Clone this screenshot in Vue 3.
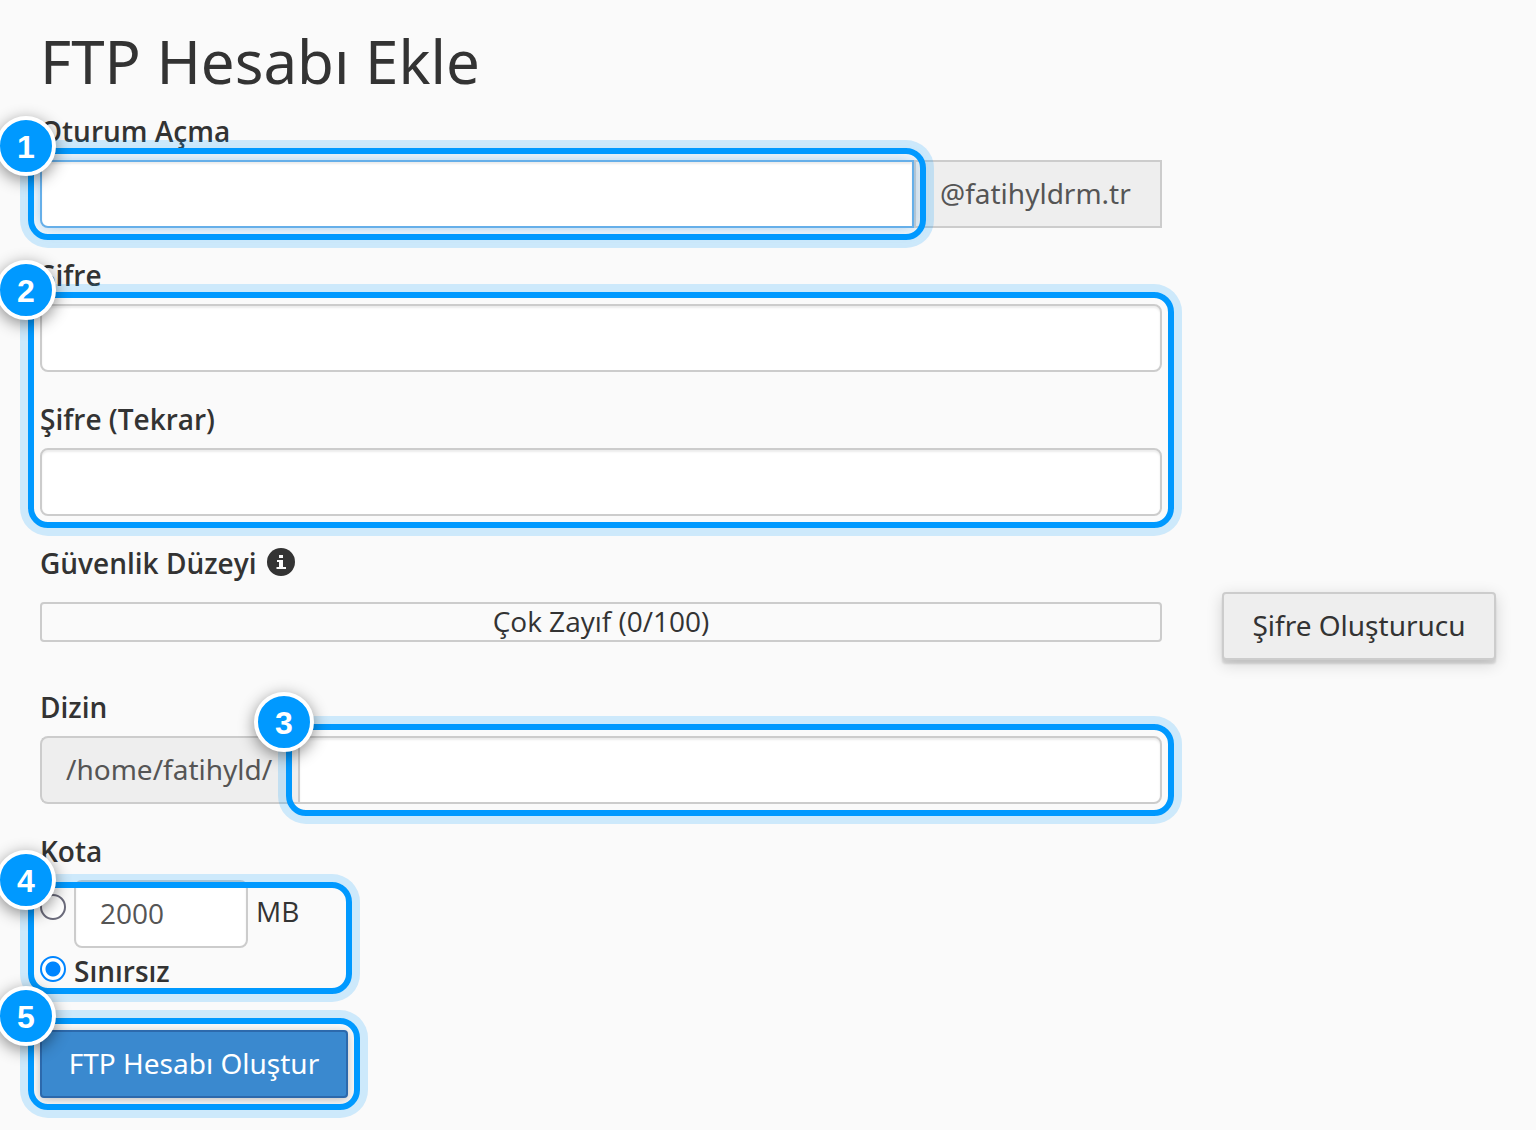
<script setup>
    import { ref, computed } from "vue";

    const login = ref("");
    const password = ref("");
    const passwordAgain = ref("");
    const directory = ref("");
    const quota = ref("2000");
    const quotaType = ref("unlimited");
    const score = ref(0);

    const strengthText = computed(() => `Çok Zayıf (${score.value}/100)`);
</script>
<template>
    <main class="page">
        <h1>FTP Hesabı Ekle</h1>
        <form class="form" @submit.prevent>
            <div class="fields">
                <div class="group">
                    <label for="login">Oturum Açma</label>
                    <div class="input-group">
                        <div class="marked grow">
                            <input id="login" class="control focused joined-right" type="text" v-model="login" />
                            <span class="mark"></span>
                            <span class="badge">1</span>
                        </div>
                        <span class="addon addon-right">@fatihyldrm.tr</span>
                    </div>
                </div>
                <div class="group">
                    <label for="password">Şifre</label>
                    <div class="marked">
                        <div class="group">
                            <input id="password" class="control" type="password" v-model="password" />
                        </div>
                        <label for="password-again">Şifre (Tekrar)</label>
                        <input id="password-again" class="control" type="password" v-model="passwordAgain" />
                        <span class="mark"></span>
                        <span class="badge">2</span>
                    </div>
                </div>
                <span id="strength-label" class="label strength-label">
                    Güvenlik Düzeyi
                    <svg class="info" viewBox="0 0 28 28" aria-hidden="true">
                        <circle cx="14" cy="14" r="14" fill="#333" />
                        <path d="M12 7h4v3h-4zM10 12h6v7h3v2h-9.500v-2h2.500v-5h-2z" fill="#fafafa" />
                    </svg>
                </span>
            </div>
            <div class="strength" role="meter" aria-labelledby="strength-label" aria-valuemin="0" aria-valuemax="100" :aria-valuenow="score">
                {{ strengthText }}
            </div>
            <button type="button" class="btn btn-generate">Şifre Oluşturucu</button>
            <div class="fields">
                <div class="group">
                    <label for="directory">Dizin</label>
                    <div class="input-group">
                        <span class="addon addon-left">/home/fatihyld/</span>
                        <div class="marked grow">
                            <input id="directory" class="control joined-left" type="text" v-model="directory" />
                            <span class="mark"></span>
                            <span class="badge">3</span>
                        </div>
                    </div>
                </div>
                <div class="quota-group">
                    <label for="quota">Kota</label>
                    <div class="marked quota">
                        <div class="quota-row limited">
                            <input type="radio" name="quota-type" value="limited" aria-label="Kota (MB)" v-model="quotaType" />
                            <input id="quota" class="control quota-input" type="text" v-model="quota" />
                            <span class="unit">MB</span>
                        </div>
                        <div class="quota-row">
                            <input id="unlimited" type="radio" name="quota-type" value="unlimited" v-model="quotaType" />
                            <label for="unlimited" class="radio-label">Sınırsız</label>
                        </div>
                        <span class="mark mark-tight"></span>
                        <span class="badge badge-tight">4</span>
                    </div>
                </div>
                <div class="marked submit">
                    <button type="submit" class="btn btn-primary">FTP Hesabı Oluştur</button>
                    <span class="mark"></span>
                    <span class="badge">5</span>
                </div>
            </div>
        </form>
    </main>
</template>

<style>
    body {
        margin: 0;
        background: #fafafa;
    }
</style>
<style scoped>
    * {
        box-sizing: border-box;
    }
    .page {
        padding: 28px 40px 32px;
        color: #333;
        font-family: "Open Sans", "Noto Sans", sans-serif;
        font-size: 28px;
        line-height: 38px;
    }
    h1 {
        margin: 0 0 18px;
        font-family: "Noto Sans", "Open Sans", sans-serif;
        font-size: 60px;
        font-weight: 400;
        line-height: 66px;
    }
    .form {
        display: grid;
        grid-template-columns: minmax(0, 1fr) auto;
        column-gap: 60px;
        align-items: start;
    }
    .fields {
        grid-column: 1;
    }
    .group {
        margin-bottom: 28px;
    }
    label, .label {
        display: block;
        margin-bottom: 10px;
        font-weight: 600;
    }
    .strength-label {
        display: flex;
        gap: 10px;
    }
    .info {
        width: 28px;
        height: 28px;
        margin-top: 4px;
    }
    .input-group {
        display: flex;
    }
    .grow {
        flex: 1;
        min-width: 0;
    }
    .control {
        display: block;
        width: 100%;
        height: 68px;
        padding: 12px 24px 14px;
        border: 2px solid #ccc;
        border-radius: 8px;
        background: #fff;
        box-shadow: inset 0 2px 2px rgba(0, 0, 0, 0.075);
        color: #555;
        font: inherit;
        outline: none;
    }
    .focused {
        border-color: #66afe9;
        box-shadow: inset 0 2px 2px rgba(0, 0, 0, 0.075), 0 0 16px rgba(102, 175, 233, 0.6);
    }
    .joined-right {
        border-top-right-radius: 0;
        border-bottom-right-radius: 0;
    }
    .joined-left {
        border-top-left-radius: 0;
        border-bottom-left-radius: 0;
    }
    .addon {
        padding: 12px 24px;
        border: 2px solid #ccc;
        background: #eee;
        color: #555;
        font-family: "Noto Sans", "Open Sans", sans-serif;
        white-space: nowrap;
    }
    .addon-right {
        min-width: 248px;
    }
    .addon-left {
        min-width: 258px;
        border-right: 0;
        border-radius: 8px 0 0 8px;
    }
    .strength {
        grid-column: 1;
        height: 40px;
        margin-top: 10px;
        border: 2px solid #ccc;
        border-radius: 4px;
        line-height: 34px;
        text-align: center;
    }
    .btn {
        height: 68px;
        padding: 12px 24px 14px;
        border: 2px solid #ccc;
        border-radius: 4px;
        background: #eee;
        box-shadow: 0 4px 2px rgba(0, 0, 0, 0.12), 0 4px 16px rgba(0, 0, 0, 0.16);
        color: #333;
        font: inherit;
        font-family: "Noto Sans", "Open Sans", sans-serif;
        white-space: nowrap;
        cursor: pointer;
    }
    .btn-generate {
        min-width: 274px;
    }
    .btn-primary {
        display: block;
        min-width: 308px;
        border-color: #2c69ac;
        background: #3a89cf;
        box-shadow: 0 2px 10px rgba(0, 0, 0, 0.24);
        color: #fff;
    }
    .form > .fields:last-child {
        margin-top: 28px;
    }
    .quota {
        width: fit-content;
        padding-right: 40px;
    }
    .quota-row {
        display: flex;
        align-items: flex-start;
        gap: 8px;
    }
    .limited {
        margin-bottom: 4px;
    }
    .quota-input {
        width: 174px;
    }
    .unit {
        min-width: 44px;
        padding-top: 12px;
    }
    .radio-label {
        margin: 0;
    }
    input[type="radio"] {
        appearance: none;
        flex: none;
        width: 26px;
        height: 26px;
        margin: 4px 0 0;
        border: 2px solid #6b6b7b;
        border-radius: 50%;
        background: #fff;
    }
    input[type="radio"]:checked {
        border-color: #0085ff;
        background: radial-gradient(circle, #0085ff 7px, #fff 8px);
    }
    .limited input[type="radio"] {
        margin-top: 14px;
    }
    .submit {
        width: fit-content;
        margin-top: 40px;
    }
    /* numbered outlines over the fields */
    .marked {
        position: relative;
    }
    .mark {
        position: absolute;
        z-index: 1;
        inset: -12px;
        border: 6px solid #0099ff;
        border-radius: 20px;
        box-shadow: 0 0 0 8px rgba(0, 153, 255, 0.18);
        pointer-events: none;
    }
    .mark-tight {
        inset: 2px -12px -4px;
    }
    .badge {
        position: absolute;
        z-index: 2;
        top: -44px;
        left: -44px;
        width: 60px;
        height: 60px;
        border: 4px solid #fff;
        border-radius: 50%;
        background: #0099ff;
        box-shadow: 0 4px 16px rgba(0, 0, 0, 0.45);
        color: #fff;
        font-family: "Liberation Sans", sans-serif;
        font-size: 32px;
        font-weight: 700;
        line-height: 54px;
        text-align: center;
        pointer-events: none;
    }
    .badge-tight {
        top: -30px;
    }
</style>
